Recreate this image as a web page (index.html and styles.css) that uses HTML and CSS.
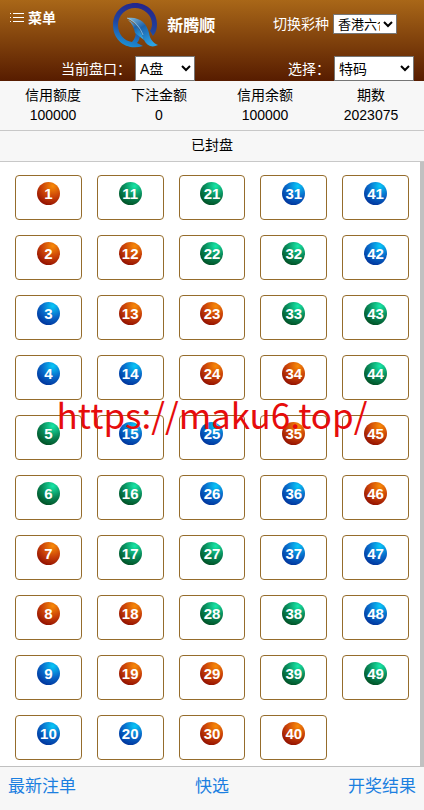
FILE: index.html
```html
<!DOCTYPE html>
<html lang="zh-CN">
<head>
<meta charset="utf-8">
<meta name="viewport" content="width=device-width, initial-scale=1">
<title>新腾顺</title>
<link rel="stylesheet" href="styles.css">
</head>
<body>
<header class="header">
  <div class="topbar">
    <button class="menu" type="button">
      <svg class="menu-icon" width="14" height="10" viewBox="0 0 14 10" fill="#fff">
        <path d="M0 0h1v1H0zM0 4h1v1H0zM0 8h1v1H0zM3 0h11v1H3zM3 4h11v1H3zM3 8h11v1H3z"/>
      </svg>
      菜单
    </button>
    <div class="brand">
      <svg class="logo" width="46" height="46" viewBox="0 0 46 46">
        <defs>
          <linearGradient id="ring" x1="0.7" y1="0" x2="0.4" y2="1">
            <stop offset="0" stop-color="#25228a"/>
            <stop offset="0.55" stop-color="#20469f"/>
            <stop offset="1" stop-color="#1c8fd4"/>
          </linearGradient>
          <linearGradient id="wing" x1="0" y1="0" x2="0.7" y2="1">
            <stop offset="0" stop-color="#8cc0dc"/>
            <stop offset="0.45" stop-color="#1c62ac"/>
            <stop offset="1" stop-color="#2aa4e6"/>
          </linearGradient>
        </defs>
        <path fill="url(#ring)" d="M30 43C14 48 0 38 0 22C0 9 10 0 22 0C35 0 44 10 44 21C44 26 43 29 40 33L37 28C38 26 39 24 39 21C39 12 31 5 22 5C13 5 5 12 5 22C5 31 11 38 19 39C22 36 23 32 23 27L27 31C27 35 26 38 24 40Z"/>
        <path fill="url(#wing)" d="M14 15C26 13 34 20 36 30C37 36 40 40 45 42C39 45 34 43 31 37C27 26 22 19 14 15Z"/>
        <path fill="url(#wing)" d="M15 17C23 20 28 28 31 37L22 30C21 25 19 20 15 17Z"/>
        <path fill="none" stroke="#a5cfe2" stroke-width="0.7" d="M14 15C22 18 27 24 30 32"/>
      </svg>
      <strong>新腾顺</strong>
    </div>
    <div class="field">
      <label for="lottery">切换彩种</label>
      <select id="lottery" class="select-lottery"><option>香港六合彩</option></select>
    </div>
  </div>
  <div class="options">
    <div class="field">
      <label for="pan">当前盘口：</label>
      <select id="pan" class="select-pan"><option>A盘</option></select>
    </div>
    <div class="field">
      <label for="play">选择：</label>
      <select id="play" class="select-play"><option>特码</option></select>
    </div>
  </div>
</header>
<dl class="stats">
  <div><dt>信用额度</dt><dd>100000</dd></div>
  <div><dt>下注金额</dt><dd>0</dd></div>
  <div><dt>信用余额</dt><dd>100000</dd></div>
  <div><dt>期数</dt><dd>2023075</dd></div>
</dl>
<div class="status">已封盘</div>
<main class="board">
  <div class="numbers" id="numbers"></div>
  <div class="scrollbar"></div>
</main>
<footer class="footer">
  <a href="#orders">最新注单</a>
  <a href="#quick">快选</a>
  <a href="#results">开奖结果</a>
</footer>
<div class="watermark">https://maku6.top/</div>
<script src="numbers.js"></script>
</body>
</html>
```
FILE: styles.css
```css
* { box-sizing: border-box; }
body {
  margin: 0;
  min-height: 100vh;
  display: flex;
  flex-direction: column;
  position: relative;
  background: #fff;
  color: #000;
  font: 14px/20px "Liberation Sans", "Noto Sans CJK SC", sans-serif;
}

/* header */
.header {
  background: linear-gradient(#a96718, #571c00);
  color: #fff;
}
.topbar {
  display: grid;
  grid-template-columns: 27% 1fr auto;
  height: 56px;
  padding-right: 27px;
}
.menu {
  display: flex;
  align-items: center;
  align-self: start;
  gap: 4px;
  margin: 8px 0 0;
  padding: 0 0 0 10px;
  border: 0;
  background: none;
  color: #fff;
  font: bold 14px/20px "Liberation Sans", "Noto Sans CJK SC", sans-serif;
}
.brand {
  display: flex;
  align-items: center;
  align-self: start;
  gap: 8px;
  padding: 3px 0 0 6px;
  font-size: 16px;
}
.field {
  display: flex;
  align-items: center;
  gap: 4px;
}
.topbar .field {
  align-self: start;
  padding-top: 14px;
}
.options {
  display: grid;
  grid-template-columns: 1fr 1fr;
}
.options .field {
  justify-content: flex-end;
  padding-right: 10px;
}
.options .field:first-child { padding-right: 17px; }
select {
  height: 25px;
  border: 1px solid #767676;
  border-radius: 0;
  background: #fff;
  color: #000;
  font: 14px "Liberation Sans", "Noto Sans CJK SC", sans-serif;
}
.select-lottery { width: 64px; height: 20px; font-size: 13px; }
.select-pan { width: 60px; }
.select-play { width: 80px; }

/* account figures */
.stats {
  display: grid;
  grid-template-columns: repeat(4, 1fr);
  margin: 0;
  padding: 4px 0 5px;
  border-bottom: 1px solid #c8c8c8;
  background: #f7f7f7;
  text-align: center;
}
.stats dd { margin: 0; }
.status {
  padding: 4px 0 6px;
  border-bottom: 1px solid #c8c8c8;
  background: #f7f7f7;
  text-align: center;
}

/* number board */
.board {
  position: relative;
  flex: 1;
  padding: 13px 15px 6px;
}
.numbers {
  display: grid;
  grid-template-columns: repeat(5, 1fr);
  grid-template-rows: repeat(10, 45px);
  grid-auto-flow: column;
  gap: 15px;
}
.number {
  display: flex;
  justify-content: center;
  align-items: flex-start;
  padding: 6px 0 0;
  border: 1px solid #956c2c;
  border-radius: 4px;
  background: #fff;
}
.ball {
  width: 23px;
  height: 23px;
  border-radius: 50%;
  color: #fff;
  font: bold 15px/24px "Liberation Sans", sans-serif;
  text-align: center;
}
.red { background: radial-gradient(circle at 68% 18%, #f88a08, #c84008 45%, #8c0c00 85%); }
.blue { background: radial-gradient(circle at 68% 18%, #08c8f8, #0868c8 45%, #003098 85%); }
.green { background: radial-gradient(circle at 68% 18%, #18e8a8, #088858 45%, #004c20 85%); }
.scrollbar {
  position: absolute;
  top: 0;
  right: 0;
  bottom: 0;
  width: 4px;
  background: #c1c1c1;
}

.footer {
  display: grid;
  grid-template-columns: repeat(3, 1fr);
  height: 44px;
  padding: 0 8px;
  border-top: 1px solid #c0c0c0;
  background: #f7f7f7;
  font-size: 17px;
  line-height: 40px;
  text-align: center;
}
.footer a { color: #1c7fe0; text-decoration: none; }
.footer a:first-child { text-align: left; }
.footer a:last-child { text-align: right; }

.watermark {
  position: absolute;
  top: 389px;
  left: 0;
  right: 0;
  color: #e60c0c;
  font: 35px/50px "Noto Sans CJK SC", sans-serif;
  text-align: center;
  pointer-events: none;
}
```
FILE: numbers.js
```js
// colour of each ball, 1 to 49: r = red, b = blue, g = green
var colors = "rrbbggrrbb" + "grrbbggrrb" + "ggrrbbggrr" + "bggrrbbggr" + "bbggrrbbg";
var names = { r: "red", b: "blue", g: "green" };
var html = "";
for (var i = 0; i < colors.length; i++) {
  html += '<button type="button" class="number"><span class="ball ' +
          names[colors[i]] + '">' + (i + 1) + '</span></button>';
}
document.getElementById("numbers").innerHTML = html;
```
